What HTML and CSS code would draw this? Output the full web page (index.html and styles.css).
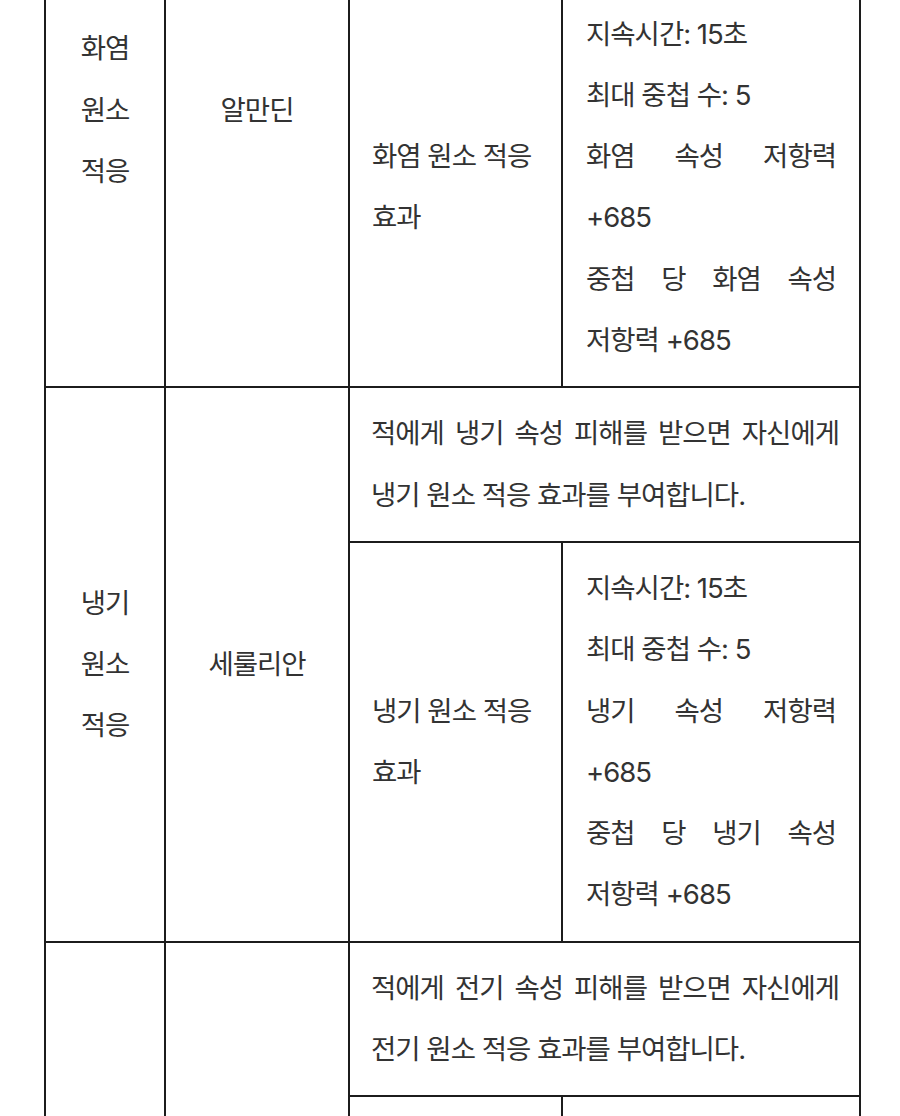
FILE: index.html
```html
<!DOCTYPE html>
<html lang="ko">
<head>
<meta charset="utf-8">
<title>원소 적응</title>
<link rel="stylesheet" href="styles.css">
</head>
<body>
<div class="page">
  <table class="skills">
    <colgroup>
      <col class="c1"><col class="c2"><col class="c3"><col class="c4">
    </colgroup>
    <tbody>
      <tr>
        <td class="label" rowspan="2">화염 원소 적응</td>
        <td class="name" rowspan="2">알만딘</td>
        <td class="desc" colspan="2">적에게 화염 속성 피해를 받으면 자신에게 화염 원소 적응 효과를 부여합니다.</td>
      </tr>
      <tr>
        <td class="effect">화염 원소 적응 효과</td>
        <td class="detail">지속시간: 15초<br>최대 중첩 수: 5<br>화염 속성 저항력 +685<br>중첩 당 화염 속성 저항력 +685</td>
      </tr>
      <tr>
        <td class="label" rowspan="2">냉기 원소 적응</td>
        <td class="name" rowspan="2">세룰리안</td>
        <td class="desc" colspan="2">적에게 냉기 속성 피해를 받으면 자신에게 냉기 원소 적응 효과를 부여합니다.</td>
      </tr>
      <tr>
        <td class="effect">냉기 원소 적응 효과</td>
        <td class="detail">지속시간: 15초<br>최대 중첩 수: 5<br>냉기 속성 저항력 +685<br>중첩 당 냉기 속성 저항력 +685</td>
      </tr>
      <tr>
        <td class="label" rowspan="2">전기 원소 적응</td>
        <td class="name" rowspan="2">토파즈</td>
        <td class="desc" colspan="2">적에게 전기 속성 피해를 받으면 자신에게 전기 원소 적응 효과를 부여합니다.</td>
      </tr>
      <tr>
        <td class="effect">전기 원소 적응 효과</td>
        <td class="detail">지속시간: 15초<br>최대 중첩 수: 5<br>전기 속성 저항력 +685<br>중첩 당 전기 속성 저항력 +685</td>
      </tr>
    </tbody>
  </table>
</div>
</body>
</html>
```

FILE: styles.css
```css
html, body {
  margin: 0;
  background: #ffffff;
}

body {
  font-family: "Inter", "Noto Sans CJK KR", sans-serif;
  font-size: 27.5px;
  line-height: 61.3px;
  letter-spacing: -1px;
  color: #333333;
  word-break: keep-all;
}

.page {
  padding-left: 44px;
}

.skills {
  border-collapse: collapse;
  table-layout: fixed;
  width: 815px;
  margin-top: -168px;
}

.c1 { width: 120px; }
.c2 { width: 184px; }
.c3 { width: 213px; }
.c4 { width: 298px; }

.skills td {
  border: 2px solid #1c1c1c;
  padding: 15px 23px;
  vertical-align: middle;
}

.skills .label,
.skills .name {
  text-align: center;
}

.skills .desc {
  padding-left: 21px;
  padding-right: 20px;
  text-align: justify;
}

.skills .effect {
  padding-left: 22px;
  padding-right: 16px;
  text-align: left;
}

.skills .detail {
  text-align: justify;
}
```
